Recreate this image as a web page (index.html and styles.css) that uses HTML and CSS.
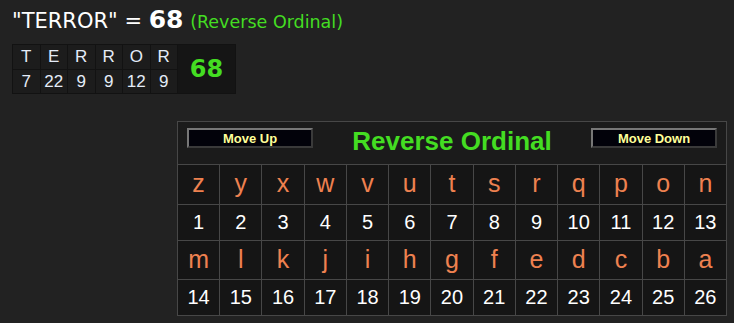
FILE: index.html
```html
<!DOCTYPE html>
<html>
<head>
<meta charset="utf-8">
<link rel="stylesheet" href="styles.css">
</head>
<body>
<div class="page">
  <h1 class="title"><span class="phrase">"TERROR" = </span><span class="total">68</span> <span class="cipher">(Reverse Ordinal)</span></h1>

  <div class="breakdown">
    <div class="bd-letter">T</div>
    <div class="bd-letter">E</div>
    <div class="bd-letter">R</div>
    <div class="bd-letter">R</div>
    <div class="bd-letter">O</div>
    <div class="bd-letter">R</div>
    <div class="bd-total">68</div>
    <div class="bd-num">7</div>
    <div class="bd-num">22</div>
    <div class="bd-num">9</div>
    <div class="bd-num">9</div>
    <div class="bd-num">12</div>
    <div class="bd-num">9</div>
  </div>

  <div class="cipher-panel">
    <div class="panel-head">
      <button class="move-btn">Move Up</button>
      <div class="panel-title">Reverse Ordinal</div>
      <button class="move-btn">Move Down</button>
    </div>

    <div class="cell letter">z</div><div class="cell letter">y</div><div class="cell letter">x</div><div class="cell letter">w</div><div class="cell letter">v</div><div class="cell letter">u</div><div class="cell letter">t</div><div class="cell letter">s</div><div class="cell letter">r</div><div class="cell letter">q</div><div class="cell letter">p</div><div class="cell letter">o</div><div class="cell letter">n</div>

    <div class="cell num">1</div><div class="cell num">2</div><div class="cell num">3</div><div class="cell num">4</div><div class="cell num">5</div><div class="cell num">6</div><div class="cell num">7</div><div class="cell num">8</div><div class="cell num">9</div><div class="cell num">10</div><div class="cell num">11</div><div class="cell num">12</div><div class="cell num">13</div>

    <div class="cell letter split">m</div><div class="cell letter split">l</div><div class="cell letter split">k</div><div class="cell letter split">j</div><div class="cell letter split">i</div><div class="cell letter split">h</div><div class="cell letter split">g</div><div class="cell letter split">f</div><div class="cell letter split">e</div><div class="cell letter split">d</div><div class="cell letter split">c</div><div class="cell letter split">b</div><div class="cell letter split">a</div>

    <div class="cell num">14</div><div class="cell num">15</div><div class="cell num">16</div><div class="cell num">17</div><div class="cell num">18</div><div class="cell num">19</div><div class="cell num">20</div><div class="cell num">21</div><div class="cell num">22</div><div class="cell num">23</div><div class="cell num">24</div><div class="cell num">25</div><div class="cell num">26</div>
  </div>
</div>
</body>
</html>
```

FILE: styles.css
```css
html, body {
  margin: 0;
  padding: 0;
  background: #222222;
}

.page {
  padding: 6px 0 0 12px;
  display: flex;
  flex-direction: column;
  align-items: flex-start;
}

.title {
  margin: 0;
  font-family: "DejaVu Sans", Verdana, sans-serif;
  font-weight: normal;
  font-size: 21px;
  line-height: 28px;
  color: #ffffff;
  white-space: nowrap;
}

.title .total {
  font-weight: bold;
  font-size: 25px;
}

.title .cipher {
  font-size: 17.5px;
  color: #44dd22;
}

.breakdown {
  margin-top: 8px;
  display: grid;
  grid-template-columns: repeat(6, 26.5px) 57px;
  grid-template-rows: 24px 23px;
  gap: 1px;
  padding: 1px;
  background: #121212;
  font-family: "Liberation Sans", Arial, sans-serif;
  font-size: 17px;
  color: #e4ecf8;
}

.bd-letter, .bd-num {
  background: #1c1c1c;
  display: flex;
  align-items: center;
  justify-content: center;
}

.bd-total {
  grid-column: 7;
  grid-row: 1 / span 2;
  background: #151515;
  display: flex;
  align-items: center;
  justify-content: center;
  font-family: "DejaVu Sans", Verdana, sans-serif;
  font-weight: bold;
  font-size: 24px;
  color: #44dd22;
}

.cipher-panel {
  margin: 27px 0 0 165px;
  width: 550px;
  box-sizing: border-box;
  display: grid;
  grid-template-columns: repeat(13, 1fr);
  grid-template-rows: 42px 39px 35px 38px 35px;
  gap: 1px;
  padding: 1px;
  background: #474747;
}

.panel-head {
  grid-column: 1 / -1;
  background: #1b1b1b;
  display: flex;
  justify-content: space-between;
  align-items: center;
  padding: 0 9px;
}

.move-btn {
  align-self: flex-start;
  margin-top: 6px;
  width: 126px;
  height: 20px;
  padding: 0;
  background: #02020a;
  border: 2px solid;
  border-color: #777777 #3a3a3a #3a3a3a #777777;
  font-family: "Liberation Sans", Arial, sans-serif;
  font-weight: bold;
  font-size: 13px;
  color: #ffff99;
}

.panel-title {
  font-family: "Liberation Sans", Arial, sans-serif;
  font-weight: bold;
  font-size: 26px;
  color: #44dd22;
  padding-bottom: 3px;
}

.cell {
  background: #151515;
  display: flex;
  align-items: center;
  justify-content: center;
  font-family: "Liberation Sans", Arial, sans-serif;
}

.cell.letter {
  font-size: 25px;
  color: #ee8150;
  padding-bottom: 2px;
}

.cell.num {
  font-size: 20px;
  color: #ffffff;
}

.cell.split {
  box-shadow: 0 -1px 0 #474747;
}
```
